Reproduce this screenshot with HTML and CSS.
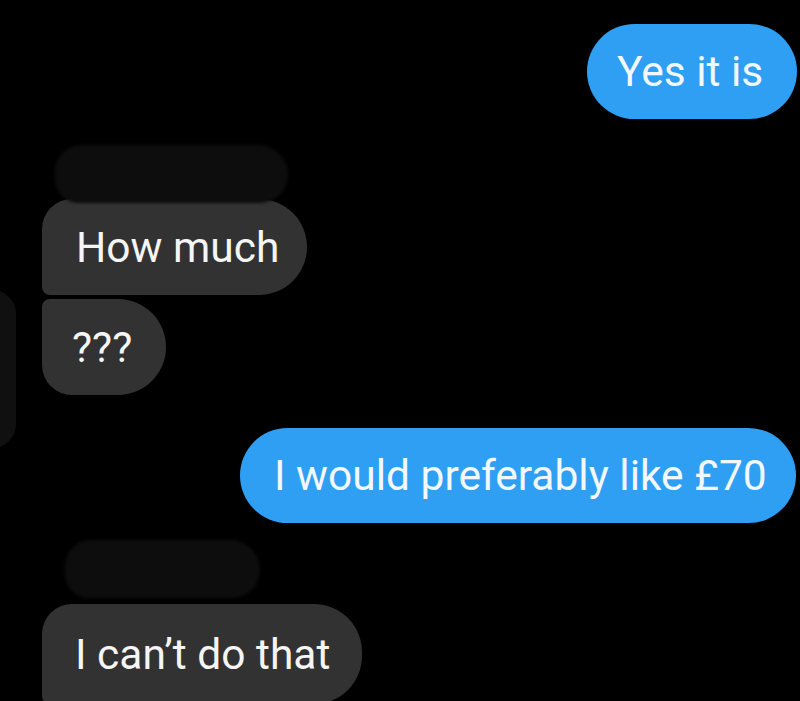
FILE: index.html
```html
<!DOCTYPE html>
<html lang="en">
<head>
<meta charset="utf-8">
<title>Chat</title>
<link rel="stylesheet" href="styles.css">
</head>
<body>
<div class="screen">
  <div class="edge-fragment"></div>
  <div class="chat">
    <div class="bubble out b1">Yes it is</div>
    <div class="name-blot blot1"></div>
    <div class="bubble in first b2">How much</div>
    <div class="bubble in last b3">???</div>
    <div class="bubble out b4">I would preferably like £70</div>
    <div class="name-blot blot2"></div>
    <div class="bubble in first b5">I can’t do that</div>
  </div>
</div>
</body>
</html>
```

FILE: styles.css
```css
html, body {
  margin: 0;
  padding: 0;
  background: #000;
}

.screen {
  position: relative;
  width: 800px;
  height: 701px;
  overflow: hidden;
  background: #000;
  font-family: Roboto, "Noto Sans", "Liberation Sans", sans-serif;
}

.chat {
  display: flex;
  flex-direction: column;
  align-items: flex-start;
}

.bubble {
  box-sizing: border-box;
  padding: 0 30px;
  font-size: 42.5px;
  color: #f4f8fb;
  white-space: nowrap;
  display: flex;
  align-items: center;
}

.out {
  align-self: flex-end;
  background: #2e9ff2;
  border-radius: 48px;
  height: 95px;
  color: #f2f8fd;
}

.in {
  background: #323232;
  height: 96px;
  margin-left: 42px;
  color: #f5f5f5;
}

.first {
  border-radius: 30px 48px 48px 8px;
}

.last {
  border-radius: 8px 48px 48px 30px;
}

.b1 {
  margin-top: 24px;
  margin-right: 3px;
  width: 210px;
}

.blot1 {
  margin-top: 26px;
  margin-left: 55px;
  width: 233px;
  height: 58px;
}

.b2 {
  margin-top: -4px;
  width: 265px;
  padding-left: 34px;
}

.b3 {
  margin-top: 4px;
  width: 124px;
}

.b4 {
  margin-top: 33px;
  margin-right: 4px;
  width: 556px;
  padding-left: 34px;
}

.blot2 {
  margin-top: 17px;
  margin-left: 65px;
  width: 195px;
  height: 58px;
}

.b5 {
  margin-top: 6px;
  width: 320px;
  height: 100px;
  padding-left: 33px;
}

.name-blot {
  background: #0d0d0d;
  border-radius: 28px 32px 30px 26px;
  filter: blur(1.5px);
}

.edge-fragment {
  position: absolute;
  left: -30px;
  top: 290px;
  width: 46px;
  height: 158px;
  background: #101010;
  border-radius: 0 24px 24px 0;
}
```
